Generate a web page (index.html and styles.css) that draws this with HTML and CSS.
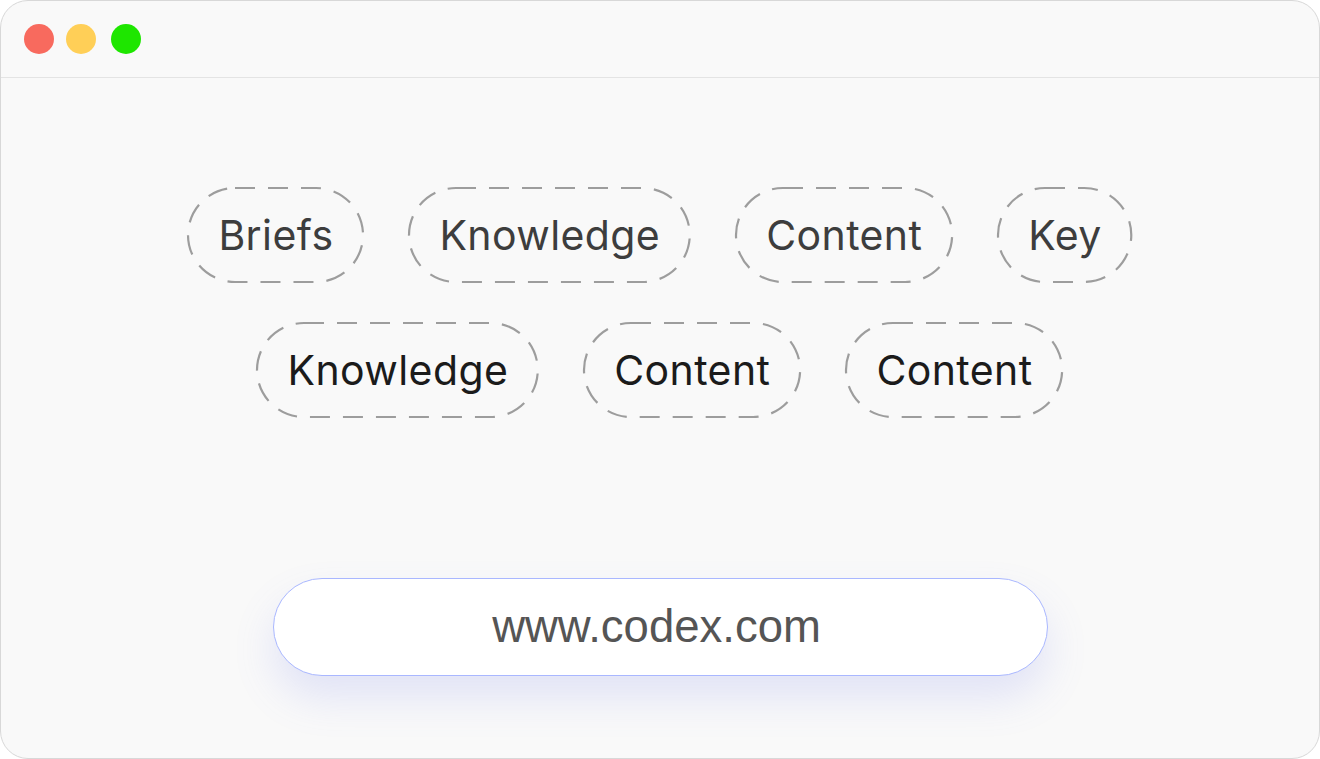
FILE: index.html
```html
<!DOCTYPE html>
<html>
<head>
<meta charset="utf-8">
<link rel="stylesheet" href="styles.css">
</head>
<body>
<div class="window">
  <div class="titlebar">
    <span class="dot red"></span>
    <span class="dot yellow"></span>
    <span class="dot green"></span>
  </div>
  <div class="main">
    <div class="row row-light">
      <div class="pill"><svg class="dash"><rect class="dash-rect" x="1" y="1" rx="47" ry="47"/></svg>Briefs</div>
      <div class="pill"><svg class="dash"><rect class="dash-rect" x="1" y="1" rx="47" ry="47"/></svg>Knowledge</div>
      <div class="pill"><svg class="dash"><rect class="dash-rect" x="1" y="1" rx="47" ry="47"/></svg>Content</div>
      <div class="pill"><svg class="dash"><rect class="dash-rect" x="1" y="1" rx="47" ry="47"/></svg>Key</div>
    </div>
    <div class="row row-dark">
      <div class="pill"><svg class="dash"><rect class="dash-rect" x="1" y="1" rx="47" ry="47"/></svg>Knowledge</div>
      <div class="pill"><svg class="dash"><rect class="dash-rect" x="1" y="1" rx="47" ry="47"/></svg>Content</div>
      <div class="pill"><svg class="dash"><rect class="dash-rect" x="1" y="1" rx="47" ry="47"/></svg>Content</div>
    </div>
    <div class="urlbar">www.codex.com</div>
  </div>
</div>
</body>
</html>
```
FILE: styles.css
```css
html, body {
  margin: 0;
  padding: 0;
  background: #ffffff;
}
body {
  width: 1320px;
  height: 759px;
  overflow: hidden;
}
.window {
  box-sizing: border-box;
  width: 1320px;
  height: 759px;
  border: 1.5px solid #d8d8d8;
  border-radius: 28px;
  background: #f9f9f9;
  overflow: hidden;
}
.titlebar {
  box-sizing: border-box;
  height: 77px;
  border-bottom: 1.5px solid #e4e4e4;
  display: flex;
  align-items: center;
  padding-left: 23px;
  padding-bottom: 1px;
}
.dot {
  width: 30px;
  height: 30px;
  border-radius: 50%;
  display: block;
}
.red { background: #f86a5e; }
.yellow { background: #ffcf57; margin-left: 12px; }
.green { background: #1ee600; margin-left: 15px; }
.main {
  display: flex;
  flex-direction: column;
  align-items: center;
  padding-top: 109px;
}
.row {
  display: flex;
  justify-content: center;
  gap: 44px;
  font-family: Inter, "Noto Sans", sans-serif;
  font-size: 41px;
  letter-spacing: 0.4px;
}
.row + .row {
  margin-top: 39px;
}
.row-light { color: #3d3d3d; }
.row-dark { color: #1b1b1b; }
.pill {
  position: relative;
  box-sizing: border-box;
  height: 96px;
  padding: 0 31px 0 31px;
  display: flex;
  align-items: center;
  line-height: 1;
}
.dash {
  position: absolute;
  left: 0;
  top: 0;
  width: 100%;
  height: 100%;
  overflow: visible;
}
.dash-rect {
  width: calc(100% - 2px);
  height: calc(100% - 2px);
  fill: none;
  stroke: #9d9d9d;
  stroke-width: 2.2;
  stroke-dasharray: 20 13;
}
.urlbar {
  box-sizing: border-box;
  margin-top: 160px;
  width: 775px;
  height: 98px;
  border: 1.5px solid #a9b7ff;
  border-radius: 49px;
  background: #ffffff;
  box-shadow: 0 22px 40px rgba(110, 125, 235, 0.17);
  display: flex;
  align-items: center;
  justify-content: center;
  font-family: "Liberation Sans", Arial, sans-serif;
  font-size: 45.5px;
  color: #555555;
  padding-right: 7px;
}
```
